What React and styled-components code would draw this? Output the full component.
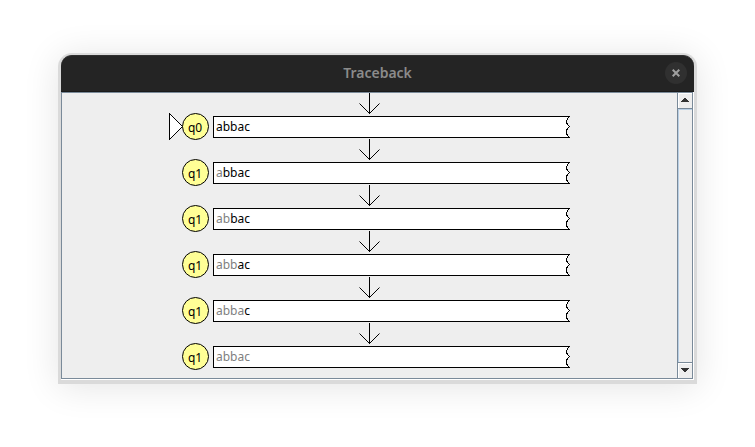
import React from "react";
import styled, { createGlobalStyle } from "styled-components";

const GlobalStyle = createGlobalStyle`
  * { box-sizing: border-box; }
  body { margin: 0; background: #fff; }
`;

const Page = styled.main`
  padding: 53px 58px 63px;
  font-family: "Noto Sans", "Open Sans", sans-serif;
  font-size: 12px;
  color: #000;
`;

const Window = styled.section`
  border: 3px solid #dadada;
  border-top: 2px solid #dcdcdc;
  border-bottom-width: 4px;
  border-radius: 14px 14px 0 0;
  background: #fff;
  box-shadow: 0 3px 36px rgba(0, 0, 0, 0.11);
`;

const TitleBar = styled.header`
  display: grid;
  grid-template-columns: 1fr auto 1fr;
  align-items: center;
  height: 37px;
  padding: 0 7px 2px;
  background: #242424;
  border-top: 1px solid #303030;
  border-bottom: 1px solid #1a1a1a;
  border-radius: 11px 11px 0 0;
`;

const Title = styled.h1`
  grid-column: 2;
  margin: 0;
  font-size: 14px;
  line-height: 18px;
  font-weight: 600;
  color: #8b8b8b;
`;

const CloseButton = styled.button`
  justify-self: end;
  display: grid;
  place-items: center;
  width: 22px;
  height: 22px;
  padding: 0;
  border: 0;
  border-radius: 50%;
  background: #303030;
`;

const Viewport = styled.div`
  display: flex;
  margin-right: 1px;
  margin-bottom: 1px;
  border: 1px solid #7a8a99;
  background: #eee;
`;

const Trace = styled.ol`
  flex: 1;
  min-width: 0;
  margin: 0;
  padding: 0 0 9px;
  list-style: none;
`;

const Step = styled.li`
  display: flex;
  flex-direction: column;
  align-items: center;
`;

const Arrow = styled.svg`
  display: block;
  width: 21px;
  height: 20px;
  overflow: visible;
`;

const Configuration = styled.div`
  display: flex;
  align-items: center;
  gap: 4px;
  height: 26px;
`;

const StateSvg = styled.svg`
  display: block;
  width: 40px;
  height: 26px;
  overflow: visible;
`;

const Tape = styled.div`
  display: flex;
  align-items: stretch;
  width: 357px;
  height: 22px;
  margin-top: 2px;
`;

const TapeText = styled.div`
  flex: 1;
  padding-left: 2px;
  border: 1px solid #000;
  border-right: 0;
  background: #fff;
  line-height: 20px;
`;

const Consumed = styled.span`
  color: #808080;
`;

const TornEdge = styled.svg`
  display: block;
  width: 5px;
  height: 22px;
`;

const ScrollBar = styled.div`
  display: flex;
  flex-direction: column;
  width: 15px;
  border-left: 1px solid #7a8a99;
`;

const ScrollButton = styled.button`
  display: grid;
  place-items: center;
  height: 15px;
  padding: 0 0 2px;
  border: 0;
  background: #eee;
  box-shadow: inset 1px 1px 0 #fff;
`;

const Track = styled.div`
  flex: 1;
  border-top: 1px solid #7a8a99;
  border-bottom: 1px solid #7a8a99;
  box-shadow: inset 1px 1px 0 #b8cfe5;
`;

const steps = [
  { state: "q0", read: "", rest: "abbac", initial: true },
  { state: "q1", read: "a", rest: "bbac" },
  { state: "q1", read: "ab", rest: "bac" },
  { state: "q1", read: "abb", rest: "ac" },
  { state: "q1", read: "abba", rest: "c" },
  { state: "q1", read: "abbac", rest: "" },
];

function StateNode({ name, initial }) {
  return (
    <StateSvg viewBox="0 0 40 26" role="img" aria-label={name}>
      {initial && (
        <path
          d="M.5 .5L13.5 13.5L.5 26.5Z"
          fill="#fff"
          stroke="#000"
          shapeRendering="crispEdges"
        />
      )}
      <circle cx="26.5" cy="13.5" r="13" fill="#ffff96" stroke="#000" />
      <text x="26" y="19" textAnchor="middle">{name}</text>
    </StateSvg>
  );
}

function TraceStep({ state, read, rest, initial }) {
  return (
    <Step>
      <Arrow viewBox="0 0 21 20" aria-hidden="true">
        <path d="M10.5 0V21M.5 10.5L10.5 20.5L20.5 10.5" fill="none" stroke="#000" />
      </Arrow>
      <Configuration>
        <StateNode name={state} initial={initial} />
        <Tape>
          <TapeText>
            <Consumed>{read}</Consumed>
            {rest}
          </TapeText>
          <TornEdge viewBox="0 0 5 22" aria-hidden="true">
            <path
              d="M0 .5H4.5L3.5 1.5L1.5 4.5V6.5L2.5 8.5L4.5 10.5L2.5 12.5L1.5 14.5V17.5L2.5 19.5L4.5 21.5H0Z"
              fill="#fff"
            />
            <path
              d="M0 .5H4.5L3.5 1.5L1.5 4.5V6.5L2.5 8.5L4.5 10.5L2.5 12.5L1.5 14.5V17.5L2.5 19.5L4.5 21.5H0"
              fill="none"
              stroke="#000"
              shapeRendering="crispEdges"
            />
          </TornEdge>
        </Tape>
      </Configuration>
    </Step>
  );
}

export default function App() {
  return (
    <>
      <GlobalStyle />
      <Page>
        <Window>
          <TitleBar>
            <Title>Traceback</Title>
            <CloseButton aria-label="Close">
              <svg width="8" height="8" viewBox="0 0 8 8">
                <path d="M.7 .7L7.3 7.3M7.3 .7L.7 7.3" stroke="#a0a0a0" strokeWidth="2" />
              </svg>
            </CloseButton>
          </TitleBar>
          <Viewport>
            <Trace>
              {steps.map((step, index) => (
                <TraceStep key={index} {...step} />
              ))}
            </Trace>
            <ScrollBar>
              <ScrollButton aria-label="Scroll up">
                <svg width="8" height="4" viewBox="0 0 8 4" shapeRendering="crispEdges">
                  <path d="M3 0h2v1h1v1h1v1h1v1H0V3h1V2h1V1h1z" fill="#333" />
                </svg>
              </ScrollButton>
              <Track />
              <ScrollButton aria-label="Scroll down">
                <svg width="8" height="4" viewBox="0 0 8 4" shapeRendering="crispEdges">
                  <path d="M0 0h8v1H7v1H6v1H5v1H3V3H2V2H1V1H0z" fill="#333" />
                </svg>
              </ScrollButton>
            </ScrollBar>
          </Viewport>
        </Window>
      </Page>
    </>
  );
}
